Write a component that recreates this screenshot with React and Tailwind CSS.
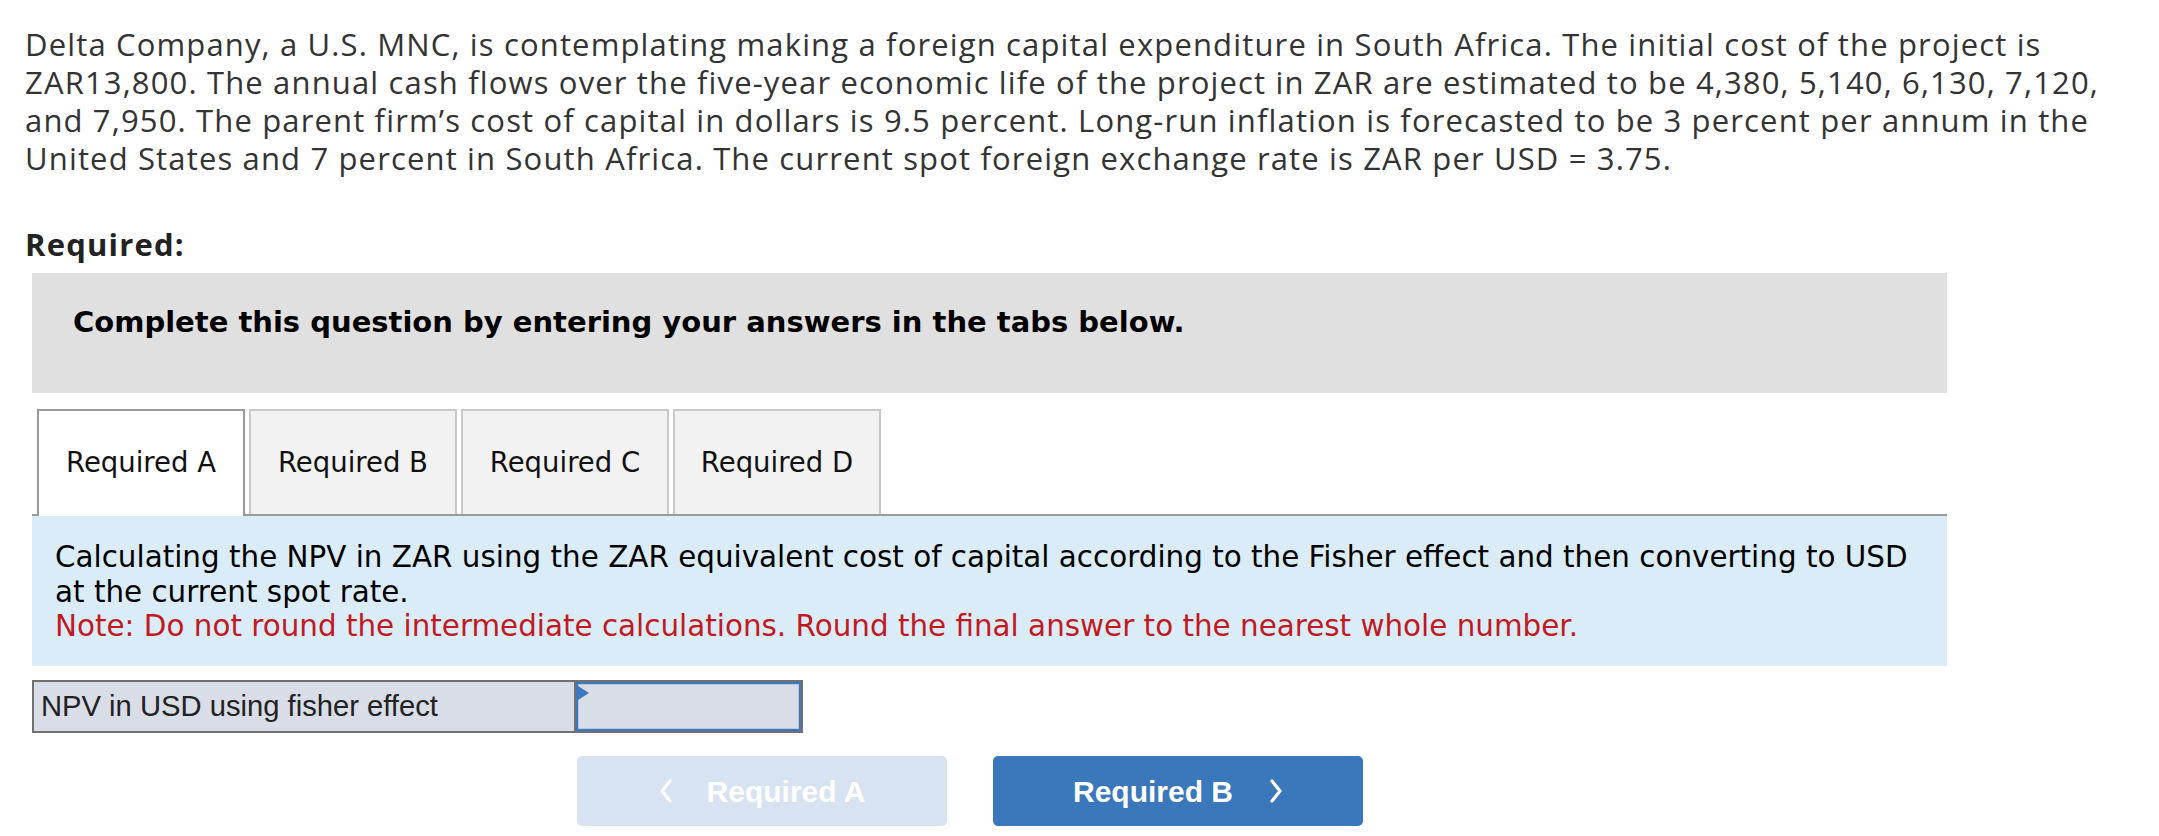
import React from 'react';

const tabs = ['Required A', 'Required B', 'Required C', 'Required D'];

const Chevron = ({ dir }) => (
    <svg width="14" height="24" viewBox="0 0 14 24" fill="none">
        {dir === 'left' ? (
            <polyline points="11,2 3,12 11,22" stroke="currentColor" strokeWidth="3.2" strokeLinecap="round" strokeLinejoin="round" />
        ) : (
            <polyline points="3,2 11,12 3,22" stroke="currentColor" strokeWidth="3.2" strokeLinecap="round" strokeLinejoin="round" />
        )}
    </svg>
);

const App = () => {
    return (
        <div className="w-[2159px] h-[836px] bg-white overflow-hidden pl-[25px] pt-[25px]">
            {/* Question text */}
            <p className="font-['Open_Sans',sans-serif] text-[31px] tracking-[1.15px] leading-[38px] text-[#333] whitespace-nowrap">
                Delta Company, a U.S. MNC, is contemplating making a foreign capital expenditure in South Africa. The initial cost of the project is<br />
                ZAR13,800. The annual cash flows over the five-year economic life of the project in ZAR are estimated to be 4,380, 5,140, 6,130, 7,120,<br />
                and 7,950. The parent firm’s cost of capital in dollars is 9.5 percent. Long-run inflation is forecasted to be 3 percent per annum in the<br />
                United States and 7 percent in South Africa. The current spot foreign exchange rate is ZAR per USD = 3.75.
            </p>

            <div className="mt-[48px] font-['Open_Sans',sans-serif] font-bold text-[31px] tracking-[1.2px] leading-[38px] text-[#222]">Required:</div>

            <div className="ml-[7px] w-[1915px] mt-[10px]">
                {/* Instructions banner */}
                <div className="h-[120px] bg-[#e0e0e0] pl-[41px] pt-[32px] font-['DejaVu_Sans',sans-serif] font-bold text-[29px] text-black leading-[34px]">
                    Complete this question by entering your answers in the tabs below.
                </div>

                {/* Tabs */}
                <div className="mt-[16px] flex items-end gap-[4px] pl-[5px] border-b-2 border-[#999]">
                    {tabs.map((t, i) => (
                        <div
                            key={t}
                            className={
                                i === 0
                                    ? 'w-[208px] h-[107px] -mb-[2px] bg-white border-2 border-b-0 border-[#999] flex items-center justify-center pb-[2px] font-["DejaVu_Sans",sans-serif] text-[27.5px] text-[#111]'
                                    : 'w-[208px] h-[105px] bg-[#f2f2f2] border-2 border-b-0 border-[#c8c8c8] flex items-center justify-center font-["DejaVu_Sans",sans-serif] text-[27.5px] text-[#111]'
                            }
                        >
                            {t}
                        </div>
                    ))}
                </div>

                {/* Tab content */}
                <div className="h-[150px] bg-[#dbecf9] pl-[23px] pr-[4px] pt-[24px] font-['DejaVu_Sans',sans-serif] text-[29.4px] leading-[34.5px]">
                    <p className="text-black whitespace-nowrap">
                        Calculating the NPV in ZAR using the ZAR equivalent cost of capital according to the Fisher effect and then converting to USD<br />
                        at the current spot rate.
                    </p>
                    <p className="text-[#c0191f] whitespace-nowrap">
                        Note: Do not round the intermediate calculations. Round the final answer to the nearest whole number.
                    </p>
                </div>

                {/* Answer table */}
                <div className="mt-[14px] w-[771px] h-[53px] flex border-2 border-[#707070] bg-[#d8dde8] font-['Liberation_Sans',Arial,sans-serif]">
                    <div className="w-[542px] border-r-2 border-[#707070] flex items-center pl-[7px] text-[29.2px] text-[#222]">
                        NPV in USD using fisher effect
                    </div>
                    <div className="relative flex-1 border-2 border-[#3b78c0]">
                        <div className="h-full border border-[#b7c6dc] bg-[#d8dde8]"></div>
                        <svg className="absolute left-0 top-[2px]" width="11" height="14" viewBox="0 0 11 14">
                            <polygon points="0,0 11,7 0,14" fill="#3b78c0" />
                        </svg>
                    </div>
                </div>

                {/* Navigation */}
                <div className="mt-[23px] ml-[545px] flex gap-[46px] font-['Liberation_Sans',Arial,sans-serif] font-bold text-[30px]">
                    <button className="w-[370px] h-[70px] rounded-[5px] bg-[#d7e3f0] text-white flex items-center justify-center gap-[34px]">
                        <Chevron dir="left" />
                        <span>Required A</span>
                    </button>
                    <button className="w-[370px] h-[70px] rounded-[5px] bg-[#3a77bb] text-white flex items-center justify-center gap-[36px]">
                        <span>Required B</span>
                        <Chevron dir="right" />
                    </button>
                </div>
            </div>
        </div>
    );
};

export default App;
